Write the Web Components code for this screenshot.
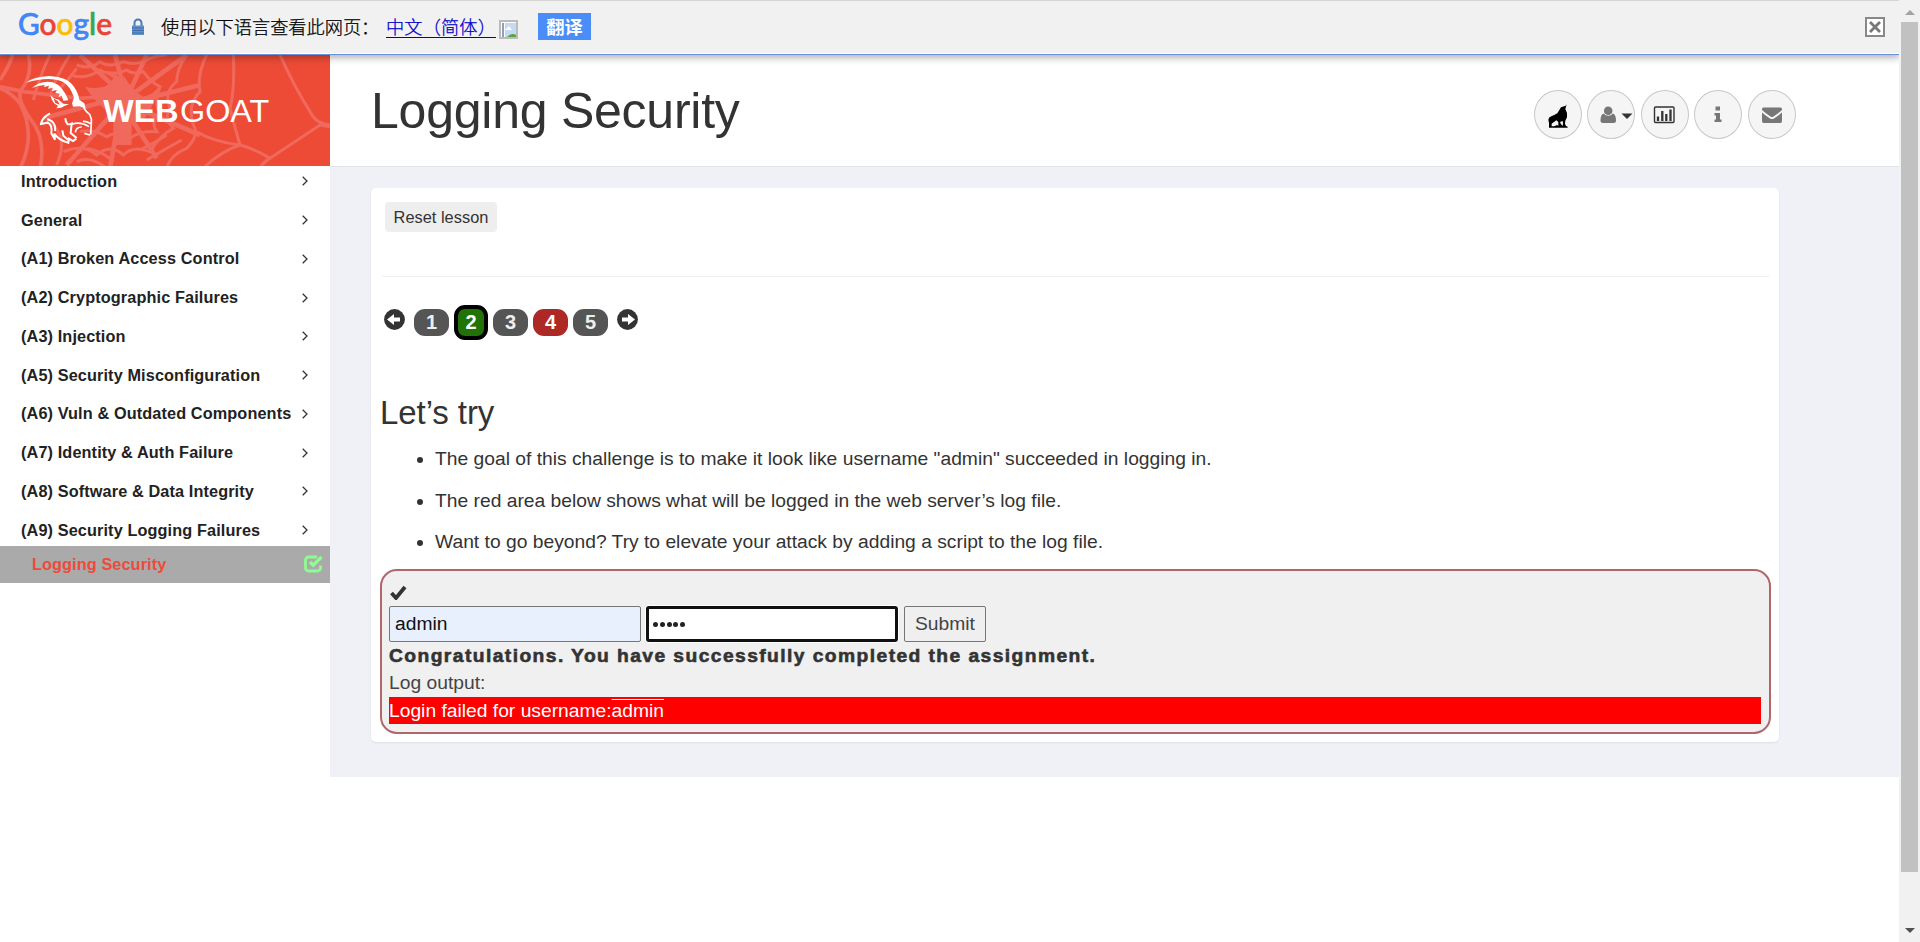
<!DOCTYPE html>
<html lang="en">
<head>
<meta charset="utf-8">
<title>WebGoat</title>
<style>
html,body{margin:0;height:100%;overflow:hidden}
body{font-family:"Liberation Sans",Arial,sans-serif;color:#333;background:#fff}
</style>
</head>
<body>
<wg-app></wg-app>
<script>
const define = (name, markup) => {
  const t = document.createElement('template');
  t.innerHTML = markup;
  customElements.define(name, class extends HTMLElement {
    constructor(){ super(); this.attachShadow({mode:'open'}).append(t.content.cloneNode(true)); }
  });
};

define('wg-translate-bar', `<style>
:host{display:flex;box-sizing:border-box;height:55px;background:#f1f1f1;border-top:1px solid #d5d5d5;border-bottom:1px solid #6b90da;box-shadow:inset 0 -1px #fff,0 1px 8px 1px rgba(0,0,0,.36);position:relative;z-index:2;font:300 18.2px/26px "Noto Sans CJK SC",sans-serif;color:#000}
.logo{margin-left:18px;width:96px;height:50px;flex:none}
.lock{margin:17px 0 0 18px;width:12px;height:18px;flex:none}
.label,.lang{-webkit-text-stroke:.25px currentColor}
.label{margin:12px 0 0 17px;width:225px;white-space:nowrap}
.lang{margin-top:12px;width:111px;color:#00c;letter-spacing:.15px;text-decoration:underline;text-underline-offset:3px;text-decoration-thickness:1px;white-space:nowrap}
.pic{margin:19px 0 0 2px;width:19px;height:19px;flex:none}
.go{margin:12px 0 0 20px;width:53px;height:27px;background:#4a8df8;color:#fff;font-weight:700;text-align:center;line-height:26px}
.close{margin:16px 14px 0 auto;width:20px;height:20px}
</style>
<svg class="logo" viewBox="0 0 96 50"><text x="0" y="34" font-family="Lato" font-size="30" font-weight="500" textLength="94" lengthAdjust="spacingAndGlyphs" stroke-width=".6"><tspan fill="#4285f4" stroke="#4285f4">G</tspan><tspan fill="#ea4335" stroke="#ea4335">o</tspan><tspan fill="#fbbc05" stroke="#fbbc05">o</tspan><tspan fill="#4285f4" stroke="#4285f4">g</tspan><tspan fill="#34a853" stroke="#34a853">l</tspan><tspan fill="#ea4335" stroke="#ea4335">e</tspan></text></svg>
<svg class="lock" viewBox="0 0 12 18"><path d="M2.500 9V5a3.500 3.500 0 0 1 7 0v4" fill="none" stroke="#4a7ab8" stroke-width="2"/><path d="M0 7.500h12V17H0z" fill="#6491c8"/><path d="M0 10h12M0 12.500h12M0 15h12" stroke="#3e6dab"/></svg>
<span class="label">使用以下语言查看此网页：</span><span class="lang">中文（简体）</span>
<svg class="pic" viewBox="0 0 19 19"><path d="M1 1h17v17H1z" fill="#fff" stroke="#bbb" stroke-width="2"/><path d="M3 3h2v14H3z" fill="#8da0bb"/><path d="M6 3h11v14H6z" fill="#c5d9f4"/><path d="m6 10 4-4 3 4z" fill="#fff"/><path d="M8 17q5-5 9-2v2z" fill="#58a43d"/></svg>
<span class="go">翻译</span>
<svg class="close" viewBox="0 0 20 20"><path d="M1 1h18v18H1z" fill="#fff" stroke="#888" stroke-width="2"/><path d="m5 5 10 10M15 5 5 15" stroke="#777" stroke-width="2.800"/></svg>`);

define('wg-brand', `<style>
:host{display:block;width:330px;height:111px;background:#ed4b36}
svg{display:block}
</style>
<svg width="330" height="111" viewBox="0 0 990 333">
<g fill="none" stroke="#f0695c" stroke-width="9">
<path d="M0 95 70 110 240 130 380 120M0 75Q25 40 38 0M60 340Q110 240 60 145Q30 110 0 100M120 340Q140 250 90 190Q55 140 60 110Q100 60 85 0" stroke-width="11"/>
<path d="M170 330Q210 240 140 195M100 135Q120 60 150 0M150 120Q170 60 210 0M170 110Q210 70 230 40"/>
<path d="M380 130 240 0M380 130 345 0M380 130 440 0M380 130 560 0M400 140 600 90M390 150 600 240M380 170 470 310M360 170 330 340M350 160 200 330M350 130 130 190" stroke-width="14"/>
<path d="M230 30Q270 45 300 20Q330 40 370 20Q410 35 450 10Q480 0 500 0M210 60Q260 75 300 45Q330 65 380 45Q400 60 430 50Q450 80 480 95Q460 140 480 180Q450 200 470 230Q420 225 390 250Q350 225 320 245Q280 220 240 230M560 0Q530 40 530 80Q490 110 510 160Q490 190 520 220Q480 240 450 290Q400 270 370 300Q330 265 290 300Q250 265 190 290M620 0Q590 60 600 110Q560 150 580 210Q600 240 560 280Q510 300 500 340M700 0Q705 100 690 160Q700 200 720 270"/>
<path d="M590 230Q640 260 720 270Q760 280 810 310L960 210L990 215M720 270Q660 290 610 340M810 310Q790 320 780 340M840 0Q880 90 930 170Q945 205 990 210"/>
<path d="M260 280Q310 290 340 320M230 320Q270 300 320 340M420 285Q470 260 500 240M440 315Q500 280 545 255"/>
</g>
<path d="M255 95Q320 110 340 70L310 50Q350 40 365 85Q380 120 370 60Q400 110 430 125Q460 120 480 90Q460 160 430 195L395 200V270H340V180Q290 150 255 95z" fill="#f0695c"/>
<g fill="#fff">
<path d="M78 83Q100 65 148 63Q203 66 221 94Q236 116 238 134L253 145L257 160L238 154L219 155L216 145L222 128Q211 92 188 80Q147 62 78 83z"/>
<path d="M96 99Q123 75 158 82Q188 91 205 136L190 137L185 122L176 126L179 116L166 114L171 105L156 108L158 98L144 101L147 92L132 96L134 90Q112 92 96 99z"/>
<path d="M151 119Q161 132 174 133L190 146L207 148L193 153L184 158L169 160L174 152Q157 147 151 119zM160 130L166 144 179 149 174 139z" fill-rule="evenodd"/>
</g>
<g fill="none" stroke="#fff" stroke-width="6">
<path d="M150 175Q126 188 123 207L143 203Q158 210 154 235L165 254 163 236Q176 256 205 263L207 251 219 258 229 251M142 192 155 198Q168 209 165 228M187 226 190 242 206 256M196 190Q196 200 203 208Q212 208 215 206L212 234 230 249"/>
<path d="M250 153Q255 169 269 178Q276 190 274 205L272 238M273 206Q258 198 249 199M216 208Q240 198 267 215M226 232Q228 216 245 216M253 235 270 240" stroke-width="5"/>
</g>
<text y="200" font-size="96" fill="#fff"><tspan x="310" font-weight="700" textLength="226" lengthAdjust="spacingAndGlyphs">WEB</tspan><tspan x="540" textLength="268" lengthAdjust="spacingAndGlyphs">GOAT</tspan></text>
</svg>`);

define('wg-nav-item', `<style>
:host{display:flex;flex:none;align-items:center;justify-content:space-between;height:38.750px;padding:0 22px 0 21px;font-weight:700;font-size:16.250px;letter-spacing:.12px;color:#222;white-space:nowrap}
svg{flex:none}
</style><slot></slot><svg width="6" height="10" viewBox="0 0 6 10"><path d="m.7.7 4.300 4.300-4.300 4.300" fill="none" stroke="#333" stroke-width="1.300"/></svg>`);

define('wg-sidebar', `<style>
:host{display:flex;flex-direction:column;width:330px;flex:none;background:#fff}
nav{display:flex;flex-direction:column;margin-top:-4px;height:384px}
wg-brand{position:relative;z-index:1}
.active{display:flex;justify-content:space-between;align-items:center;height:37px;background:#aaa;color:#ed4b3a;font-weight:700;font-size:16.250px;letter-spacing:.1px;padding:0 7px 0 32px;position:relative}
.active svg{margin-top:-2px}
</style>
<wg-brand></wg-brand>
<nav><wg-nav-item>Introduction</wg-nav-item><wg-nav-item>General</wg-nav-item><wg-nav-item>(A1) Broken Access Control</wg-nav-item><wg-nav-item>(A2) Cryptographic Failures</wg-nav-item><wg-nav-item>(A3) Injection</wg-nav-item><wg-nav-item>(A5) Security Misconfiguration</wg-nav-item><wg-nav-item>(A6) Vuln &amp; Outdated Components</wg-nav-item><wg-nav-item>(A7) Identity &amp; Auth Failure</wg-nav-item><wg-nav-item>(A8) Software &amp; Data Integrity</wg-nav-item><wg-nav-item>(A9) Security Logging Failures</wg-nav-item></nav>
<div class="active"><span>Logging Security</span><svg width="19" height="18" viewBox="0 0 19 18"><path d="M13 2H4.500A3 3 0 0 0 1.500 5v8a3 3 0 0 0 3 3h9a3 3 0 0 0 3-3V10.500" fill="none" stroke="#90fb90" stroke-width="2.800"/><path d="m6 7 3.200 3.200L17.500 2" fill="none" stroke="#90fb90" stroke-width="3.400"/></svg></div>`);

define('wg-icon-button', `<style>
:host{display:flex;align-items:center;justify-content:center;box-sizing:border-box;width:48px;height:49px;border:1px solid #c8c8c8;border-radius:50%;background:#f5f5f5}
</style><slot></slot>`);

define('wg-header', `<style>
:host{display:flex;justify-content:space-between;box-sizing:border-box;height:112px;background:#fff;border-bottom:1px solid #e1e3e8;padding:0 103.500px 0 41px}
h1{margin:28px 0 0;font-weight:400;font-size:50px;line-height:56px;letter-spacing:-.24px;color:#333}
.tools{display:flex;gap:5.400px;margin-top:35px}
svg{display:block;overflow:visible}
</style><h1>Logging Security</h1>
<div class="tools">
<wg-icon-button><svg width="48" height="48" viewBox="0 0 144 144"><path d="M98 40 94 54 99 66 99 79 94 89 93 98 96 105 101 107V110H45V96L43 86Q44 79 52 76Q63 71 70 67L76 57 81 49 95 44zM67 88Q60 94 53 98V106H60L70 102L73 105V93zM78 93Q80 101 86 105L87 97 86 90z" fill-rule="evenodd"/></svg></wg-icon-button>
<wg-icon-button><svg width="48" height="48" viewBox="0 0 48 48"><circle cx="21.200" cy="19.700" r="4.300" fill="#777"/><path d="M16.700 22.500Q13.500 23.500 13.500 29.500Q13.500 32 16 32h10.500Q29 32 29 29.500Q29 23.500 25.800 22.500Q24 24.800 21.200 24.800T16.700 22.500z" fill="#777"/><path d="M34.500 22.500h11l-5.500 5.500z" fill="#333"/></svg></wg-icon-button>
<wg-icon-button><svg width="48" height="48" viewBox="0 0 48 48"><rect x="13.500" y="16" width="19.500" height="15.500" rx="1" fill="none" stroke="#333" stroke-width="1.400"/><path d="M17 25.500v4.500M21.300 20v10M25.300 23v7M29.500 18.500V30" stroke="#333" stroke-width="2.300"/></svg></wg-icon-button>
<wg-icon-button><svg width="48" height="48" viewBox="0 0 48 48"><path d="M21.500 15.500H26V19.500H21.500zM20.500 22H26V28.500H27.500V31H20.500V28.500H22V24.500H20.500z" fill="#777"/></svg></wg-icon-button>
<wg-icon-button><svg width="48" height="48" viewBox="0 0 48 48"><path d="M15.500 16.500h17q1.500 0 1.500 1.500v1q-4.500 4-8.500 6.500-1.500 1-3 0-4.500-2.800-8.500-6.500v-1q0-1.500 1.500-1.500zM14 21.500q3.500 3 8 6 2 1.200 4 0 4.500-3 8-6v8.500q0 2-1.500 2h-17q-1.500 0-1.500-2z" fill="#777"/></svg></wg-icon-button>
</div>`);

define('wg-pager', `<style>
:host{display:flex;align-items:center;height:35px;padding:28px 0 0 4px;font-weight:700;font-size:20px}
.arrow{width:21px;height:21px;flex:none;margin-top:-6px}
.pills{display:flex;gap:5px;margin:0 9px 0 9px}
b{display:flex;align-items:center;justify-content:center;width:35px;height:27px;border-radius:11px;background:#555;color:#eee}
.on{box-sizing:border-box;width:34px;height:35px;margin:-4px 0;border:4px solid #000;background:#227306;color:#fff}
.bad{background:#ac2925;color:#fff}
</style>
<svg class="arrow" viewBox="0 0 21 21"><circle cx="10.500" cy="10.500" r="10.400" fill="#333"/><path d="m3 10.500 7-5.500v3.500h6v4h-6V16z" fill="#fff"/></svg>
<div class="pills"><b>1</b><b class="on">2</b><b>3</b><b class="bad">4</b><b>5</b></div>
<svg class="arrow" viewBox="0 0 21 21"><circle cx="10.500" cy="10.500" r="10.400" fill="#333"/><path d="m18 10.500-7-5.500v3.500H5v4h6V16z" fill="#fff"/></svg>`);

define('wg-attempt', `<style>
:host{display:flex;flex-direction:column;box-sizing:border-box;height:165px;border:2px solid #b0666a;border-radius:17px;background:#f0f0f0;padding:14px 8px 0 7px;font-size:19.250px}
.check{width:17px;height:15px;margin-left:1px}
.row{display:flex;gap:5px;margin-top:6px;height:36px}
.f{box-sizing:border-box;border:1px solid #767676;border-radius:2px;width:252px;padding-left:5px;line-height:34px;background:#e8f0fe;color:#111}
.pw{background:#fff;border:3px solid #101010;border-radius:3px;box-shadow:0 0 0 1px #fff;padding-left:4px;display:flex;align-items:center;gap:1.800px}
.pw i{width:5px;height:5px;border-radius:50%;background:#222}
.s{width:82px;padding:0;text-align:center;background:#efefef;color:#444;margin-left:1px}
.ok{font-weight:700;line-height:26px;margin-top:1px;white-space:nowrap;letter-spacing:1.420px;-webkit-text-stroke:.6px #333}
.out{line-height:27px;color:#444}
.log{background:red;color:#fff;height:27px;line-height:27px;margin-top:1px;white-space:pre}
.log span{text-decoration:overline;text-decoration-thickness:1px}
</style>
<svg class="check" viewBox="0 0 17 15"><path d="m1.500 8 4.500 5L15 2" fill="none" stroke="#333" stroke-width="3.800"/></svg>
<div class="row"><div class="f">admin</div><div class="f pw"><i></i><i></i><i></i><i></i><i></i></div><div class="f s">Submit</div></div>
<div class="ok">Congratulations. You have successfully completed the assignment.</div>
<div class="out">Log output:</div>
<div class="log">Login failed for username:<span>admin</span></div>`);

define('wg-lesson', `<style>
:host{display:block;box-sizing:border-box;width:1408px;height:554px;background:#fff;border-radius:5px;box-shadow:0 1px 2px rgba(0,0,0,.08);padding:14px 8px 0 9px}
.bar{height:74px;border-bottom:1px solid #eee;border-radius:5px}
.reset{margin-left:5px;width:112px;height:30px;border-radius:4px;background:#eee;font-size:16.400px;line-height:30px;text-align:center}
h2{font-weight:400;font-size:33px;line-height:40px;letter-spacing:-.08px;margin:53px 0 0;height:40px}
ul{margin:12px 0 0;padding:0 0 0 55px;height:124px;font-size:19.250px;line-height:28px}
li{margin-bottom:13.500px;white-space:nowrap}
</style>
<div class="bar"><div class="reset">Reset lesson</div></div>
<wg-pager></wg-pager>
<h2>Let’s try</h2>
<ul><li>The goal of this challenge is to make it look like username "admin" succeeded in logging in.</li><li>The red area below shows what will be logged in the web server’s log file.</li><li>Want to go beyond? Try to elevate your attack by adding a script to the log file.</li></ul>
<wg-attempt></wg-attempt>`);

define('wg-scrollbar', `<style>
:host{display:flex;flex-direction:column;align-items:center;width:21px;flex:none;background:#f1f1f1;height:942px;position:relative;z-index:3}
.t{width:17px;height:850px;background:#c1c1c1}
svg{display:block;height:22px}svg:last-child{margin-top:48px}
</style><svg width="10" height="22"><path d="m0 15 5-5 5 5z" fill="#a3a3a3"/></svg><div class="t"></div><svg width="10" height="22"><path d="m0 8 5 5 5-5z" fill="#505050"/></svg>`);

define('wg-app', `<style>
:host{display:flex;height:942px;width:1920px}
.page{width:1899px;flex:none}
.cols{display:flex;height:722px}
.main{flex:1;background:#f0f1f7}
wg-lesson{margin:21px 0 0 41px}
</style>
<div class="page"><wg-translate-bar></wg-translate-bar><div class="cols"><wg-sidebar></wg-sidebar><div class="main"><wg-header></wg-header><wg-lesson></wg-lesson></div></div></div><wg-scrollbar></wg-scrollbar>`);
</script>
</body>
</html>
